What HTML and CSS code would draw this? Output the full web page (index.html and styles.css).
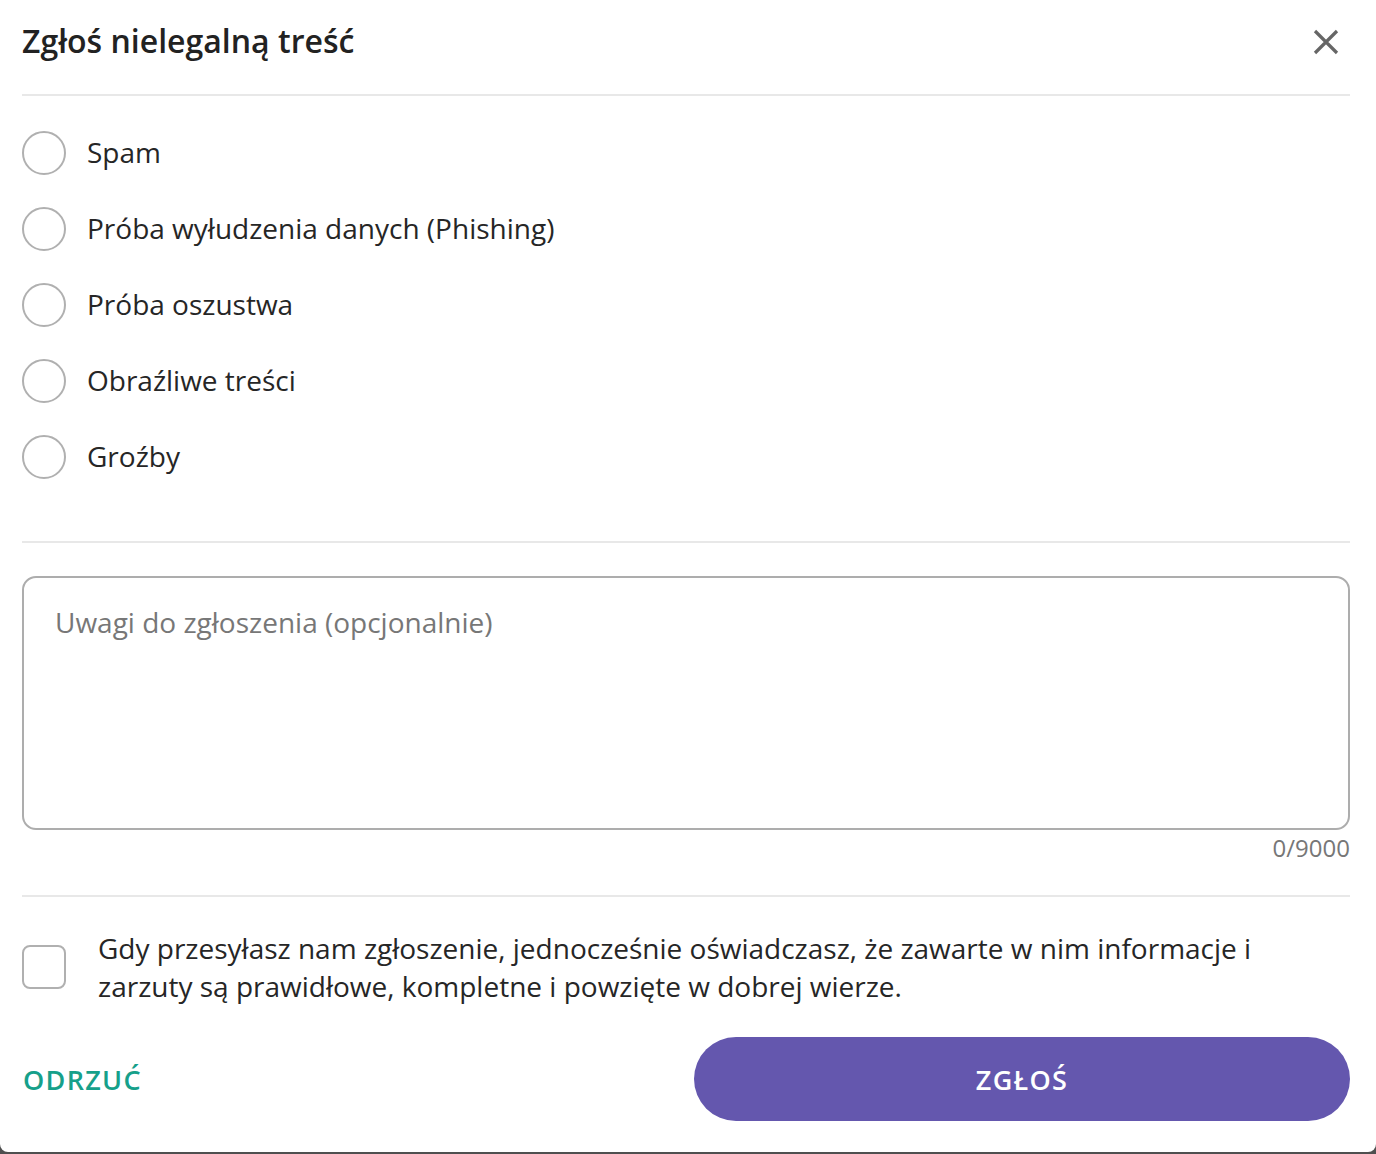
FILE: index.html
```html
<!DOCTYPE html>
<html lang="pl">
<head>
<meta charset="utf-8">
<title>Zgłoś nielegalną treść</title>
<link rel="stylesheet" href="styles.css">
</head>
<body>
<div class="modal">
  <header class="modal-header">
    <h1 class="title">Zgłoś nielegalną treść</h1>
    <button class="close" aria-label="Zamknij">
      <svg width="26" height="26" viewBox="0 0 26 26"><path d="M2 2 L24 24 M24 2 L2 24" stroke="#666" stroke-width="3.2" stroke-linecap="butt" fill="none"/></svg>
    </button>
  </header>
  <ul class="options">
    <li class="option"><span class="radio"></span><span class="label">Spam</span></li>
    <li class="option"><span class="radio"></span><span class="label">Próba wyłudzenia danych (Phishing)</span></li>
    <li class="option"><span class="radio"></span><span class="label">Próba oszustwa</span></li>
    <li class="option"><span class="radio"></span><span class="label">Obraźliwe treści</span></li>
    <li class="option"><span class="radio"></span><span class="label">Groźby</span></li>
  </ul>
  <section class="notes">
    <div class="textarea"><span class="placeholder">Uwagi do zgłoszenia (opcjonalnie)</span></div>
    <div class="counter">0/9000</div>
  </section>
  <div class="consent">
    <span class="checkbox"></span>
    <p class="consent-text">Gdy przesyłasz nam zgłoszenie, jednocześnie oświadczasz, że zawarte w nim informacje i zarzuty są prawidłowe, kompletne i powzięte w dobrej wierze.</p>
  </div>
  <div class="actions">
    <button class="btn-reject">ODRZUĆ</button>
    <button class="btn-submit">ZGŁOŚ</button>
  </div>
</div>
</body>
</html>
```
FILE: styles.css
```css
* { box-sizing: border-box; }
html, body { margin: 0; padding: 0; }
body {
  background: #4f4f4f;
  font-family: "Open Sans", "Noto Sans", sans-serif;
  color: #262626;
}
.modal {
  background: #fff;
  height: 1152px;
  padding: 0 26px 0 22px;
  border-radius: 0 0 8px 8px;
  overflow: hidden;
}
.modal-header {
  display: flex;
  justify-content: space-between;
  align-items: center;
  padding: 21px 0 33px;
  border-bottom: 2px solid #e8e8e8;
}
.title {
  margin: 0;
  font-size: 32px;
  font-weight: 600;
  line-height: 40px;
  color: #222;
}
.close {
  border: 0;
  background: none;
  padding: 0;
  margin-right: 11px;
  margin-top: 2px;
  width: 26px;
  height: 26px;
  display: flex;
}
.options {
  list-style: none;
  margin: 0;
  padding: 19px 0 46px;
  border-bottom: 2px solid #e8e8e8;
}
.option {
  display: flex;
  align-items: center;
  height: 76px;
  gap: 21px;
}
.radio {
  width: 44px;
  height: 44px;
  border: 2px solid #b0b0b0;
  border-radius: 50%;
  flex: none;
}
.label {
  font-size: 28px;
  line-height: 38px;
  padding-bottom: 3px;
  color: #262626;
}
.notes {
  padding: 33px 0 32px;
  border-bottom: 2px solid #e8e8e8;
}
.textarea {
  height: 254px;
  border: 2px solid #adadad;
  border-radius: 14px;
  padding: 25px 31px;
}
.placeholder {
  font-size: 28px;
  line-height: 38px;
  color: #777;
}
.counter {
  margin-top: 3px;
  text-align: right;
  font-size: 24px;
  line-height: 30px;
  color: #777;
}
.consent {
  display: flex;
  align-items: center;
  gap: 32px;
  margin-top: 32px;
}
.checkbox {
  width: 44px;
  height: 44px;
  border: 2px solid #b0b0b0;
  border-radius: 8px;
  flex: none;
}
.consent-text {
  margin: 0;
  font-size: 28px;
  line-height: 38px;
  color: #262626;
}
.actions {
  display: grid;
  grid-template-columns: 1fr 1fr;
  gap: 16px;
  margin-top: 32px;
  align-items: center;
}
.btn-reject {
  justify-self: start;
  border: 0;
  background: none;
  padding: 0 0 0 1px;
  font-family: inherit;
  font-size: 27px;
  font-weight: 600;
  letter-spacing: 1.3px;
  color: #16a08a;
}
.btn-submit {
  height: 84px;
  border: 0;
  border-radius: 42px;
  background: #6457ae;
  color: #fff;
  font-family: inherit;
  font-size: 27px;
  font-weight: 600;
  letter-spacing: 1.3px;
}
```
